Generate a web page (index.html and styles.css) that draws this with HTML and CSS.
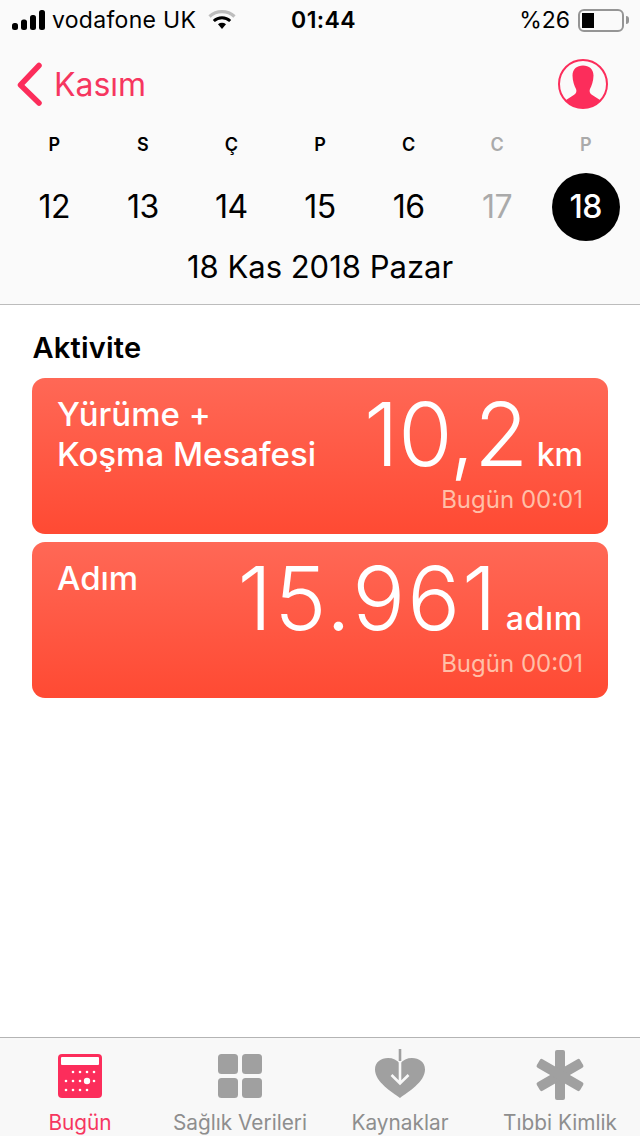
FILE: index.html
```html
<!DOCTYPE html>
<html lang="tr">
<head>
  <meta charset="UTF-8">
  <meta name="viewport" content="width=device-width, initial-scale=1.0">
  <title>Sağlık</title>
  <link rel="stylesheet" href="styles.css">
</head>
<body>
  <div class="page">
    <header class="top">
      <div class="status">
        <div class="status-left">
          <svg class="signal" width="33" height="20" viewBox="0 0 33 20">
            <rect x="0" y="13" width="6" height="7" rx="2.500"/>
            <rect x="9" y="9.500" width="6" height="10.500" rx="2.500"/>
            <rect x="18" y="5" width="6" height="15" rx="2.500"/>
            <rect x="27" y="0" width="6" height="20" rx="2.500"/>
          </svg>
          <span class="carrier">vodafone UK</span>
          <svg class="wifi" width="28" height="22" viewBox="0 0 28 22">
            <path d="M1.500 7.500C8.500 1 19.500 1 26.500 7.500" fill="none" stroke="#bdbdbd" stroke-width="3.200"/>
            <path d="M5.800 12C10.500 7.800 17.500 7.800 22.200 12" fill="none" stroke="#000" stroke-width="3"/>
            <path d="M10 15.200C12.400 13.400 15.600 13.400 18 15.200L14 20Z"/>
          </svg>
        </div>
        <div class="clock">01:44</div>
        <div class="status-right">
          <span class="percent">%26</span>
          <div class="battery"><div class="battery-level"></div></div>
          <div class="battery-tip"></div>
        </div>
      </div>

      <div class="nav">
        <a class="back">
          <svg width="28" height="44" viewBox="0 0 28 44">
            <path d="M23 3.500L4.500 23L23 41" fill="none" stroke="#fc2d5b" stroke-width="5.500" stroke-linecap="round" stroke-linejoin="round"/>
          </svg>
          <span>Kasım</span>
        </a>
        <svg class="profile" width="50" height="50" viewBox="0 0 50 50">
          <defs><clipPath id="round"><circle cx="25" cy="25" r="24"/></clipPath></defs>
          <circle cx="25" cy="25" r="24" fill="#fafafa" stroke="#fc2d5b" stroke-width="2"/>
          <path clip-path="url(#round)" fill="#fc2d5b" d="M25 6.500C31 6.500 35.500 10 35.500 16.500C35.500 22 33.500 27 32 30C31 33 32 35 35 36.500L42 41V50H8V41L15 36.500C18 35 19 33 18 30C16.500 27 14.500 22 14.500 16.500C14.500 10 19 6.500 25 6.500Z"/>
        </svg>
      </div>

      <div class="week">
        <div class="day"><b>P</b><span>12</span></div>
        <div class="day"><b>S</b><span>13</span></div>
        <div class="day"><b>Ç</b><span>14</span></div>
        <div class="day"><b>P</b><span>15</span></div>
        <div class="day"><b>C</b><span>16</span></div>
        <div class="day off"><b>C</b><span>17</span></div>
        <div class="day off current"><b>P</b><span>18</span></div>
      </div>
      <div class="full-date">18 Kas 2018 Pazar</div>
    </header>

    <main class="content">
      <h2 class="section">Aktivite</h2>

      <div class="card">
        <div class="card-title">Yürüme +<br>Koşma Mesafesi</div>
        <div class="card-data">
          <div class="reading"><span class="value tight">10,2</span><span class="unit">km</span></div>
          <div class="when">Bugün 00:01</div>
        </div>
      </div>

      <div class="card">
        <div class="card-title">Adım</div>
        <div class="card-data">
          <div class="reading"><span class="value">15.961</span><span class="unit wide">adım</span></div>
          <div class="when">Bugün 00:01</div>
        </div>
      </div>
    </main>

    <nav class="tabs">
      <div class="tab active">
        <svg width="44" height="44" viewBox="0 0 44 44">
          <rect width="44" height="44" rx="4" fill="#fc2d5b"/>
          <rect x="3" y="3" width="38" height="8" rx="1" fill="#fff"/>
          <g fill="#fff">
            <circle cx="15" cy="18" r="1.300"/><circle cx="22" cy="18" r="1.300"/><circle cx="29" cy="18" r="1.300"/><circle cx="36" cy="18" r="1.300"/>
            <circle cx="8" cy="27" r="1.300"/><circle cx="15" cy="27" r="1.300"/><circle cx="22" cy="27" r="1.300"/><circle cx="29" cy="27" r="3.200"/><circle cx="36" cy="27" r="1.300"/>
            <circle cx="8" cy="36" r="1.300"/><circle cx="15" cy="36" r="1.300"/><circle cx="22" cy="36" r="1.300"/><circle cx="29" cy="36" r="1.300"/>
          </g>
        </svg>
        <span>Bugün</span>
      </div>
      <div class="tab">
        <svg width="44" height="44" viewBox="0 0 44 44" fill="#a0a0a0">
          <rect width="20" height="20" rx="3.500"/><rect x="24" width="20" height="20" rx="3.500"/>
          <rect y="24" width="20" height="20" rx="3.500"/><rect x="24" y="24" width="20" height="20" rx="3.500"/>
        </svg>
        <span>Sağlık Verileri</span>
      </div>
      <div class="tab">
        <svg class="icon-heart" width="50" height="50" viewBox="0 0 50 50">
          <path fill="#a0a0a0" d="M25 49C17 43 0 33 0 20.500C0 13 6 9 13 9C18 9 22 11 25 14.500C28 11 32 9 37 9C44 9 50 13 50 20.500C50 33 33 43 25 49Z"/>
          <path d="M25 12V34.500M16.500 26L25 34.500L33.500 26" fill="none" stroke="#f8f8f8" stroke-width="2.600"/>
          <path d="M25 0V12" fill="none" stroke="#a0a0a0" stroke-width="2.600"/>
        </svg>
        <span>Kaynaklar</span>
      </div>
      <div class="tab">
        <svg class="icon-star" width="50" height="50" viewBox="0 0 50 50" fill="#a0a0a0">
          <rect x="20" y="0" width="10" height="50" rx="2"/>
          <rect x="20" y="0" width="10" height="50" rx="2" transform="rotate(60 25 25)"/>
          <rect x="20" y="0" width="10" height="50" rx="2" transform="rotate(120 25 25)"/>
        </svg>
        <span>Tıbbi Kimlik</span>
      </div>
    </nav>
  </div>
</body>
</html>
```

FILE: styles.css
```css
body{
  margin: 0;
  background: #fff;
  font-family: Inter, "Liberation Sans", sans-serif;
  color: #000;
}
.page{
  width: 640px;
  height: 1136px;
  display: flex;
  flex-direction: column;
  overflow: hidden;
}

/* header block */
.top{
  height: 304px;
  background: #fafafa;
  border-bottom: 1px solid #bcbcbc;
}
.status{
  height: 40px;
  padding: 0 11px 0 12px;
  display: flex;
  align-items: center;
  position: relative;
}
.status-left{
  display: flex;
  align-items: center;
}
.carrier{
  margin-left: 7px;
  font-size: 23px;
  letter-spacing: 0.3px;
}
.wifi{
  margin-left: 12px;
}
.clock{
  position: absolute;
  left: 7px;
  right: 0;
  text-align: center;
  font-size: 23px;
  font-weight: 600;
  letter-spacing: 0.4px;
}
.status-right{
  margin-left: auto;
  display: flex;
  align-items: center;
}
.percent{
  font-size: 23px;
  margin-right: 8px;
}
.battery{
  width: 46px;
  height: 23px;
  box-sizing: border-box;
  border: 2px solid #959595;
  border-radius: 6px;
  padding: 2px;
}
.battery-level{
  width: 12px;
  height: 100%;
  background: #000;
}
.battery-tip{
  width: 3px;
  height: 8px;
  margin-left: 2px;
  background: #959595;
  border-radius: 0 3px 3px 0;
}
.nav{
  height: 88px;
  padding: 0 32px 0 16px;
  display: flex;
  align-items: center;
  justify-content: space-between;
}
.back{
  display: flex;
  align-items: center;
  gap: 10px;
  color: #f6365f;
  font-size: 32px;
}
.week{
  display: grid;
  grid-template-columns: repeat(7, 1fr);
  padding: 0 10px;
}
.day{
  display: flex;
  flex-direction: column;
  align-items: center;
}
.day b{
  height: 32px;
  margin-top: 1px;
  line-height: 32px;
  font-size: 18px;
  font-weight: 600;
}
.day span{
  margin-top: 12px;
  width: 68px;
  height: 68px;
  line-height: 68px;
  border-radius: 50%;
  text-align: center;
  font-size: 32px;
  letter-spacing: -0.5px;
}
.off b, .off span{
  color: #aaa;
}
.current span{
  background: #000;
  color: #fff;
  font-weight: 500;
}
.full-date{
  margin-top: 6px;
  text-align: center;
  font-size: 31px;
  line-height: 40px;
}

/* cards */
.content{
  flex: 1;
  padding: 0 32px;
}
.section{
  margin: 24px 0 11px 0.5px;
  font-size: 29px;
  line-height: 38px;
  font-weight: 600;
  letter-spacing: 0.2px;
}
.card{
  height: 156px;
  margin-bottom: 8px;
  box-sizing: border-box;
  padding: 16px 25px 0;
  border-radius: 13px;
  background: linear-gradient(#ff6856, #ff4a33);
  color: #fff;
  display: flex;
  justify-content: space-between;
}
.card-title{
  font-size: 33px;
  line-height: 40px;
  font-weight: 500;
}
.card-data{
  text-align: right;
}
.reading{
  height: 92px;
  margin-top: -2px;
  display: flex;
  align-items: baseline;
  justify-content: flex-end;
  gap: 7px;
}
.value{
  font-size: 88px;
  line-height: 84px;
  font-weight: 300;
  letter-spacing: 2px;
}
.tight{
  letter-spacing: -0.5px;
  margin-right: 2px;
}
.unit{
  font-size: 32px;
  font-weight: 500;
}
.wide{
  letter-spacing: 0.7px;
}
.when{
  margin-top: 1px;
  font-size: 24px;
  line-height: 30px;
  color: #ffbfa8;
}

/* tab bar */
.tabs{
  height: 98px;
  background: #f8f8f8;
  border-top: 1px solid #b4b4b4;
  display: grid;
  grid-template-columns: repeat(4, 1fr);
}
.tab{
  position: relative;
  padding-top: 16px;
  box-sizing: border-box;
  display: flex;
  flex-direction: column;
  align-items: center;
  color: #8e8e8e;
  font-size: 20.800px;
}
.icon-heart{
  margin-top: -5px;
}
.icon-star{
  margin-top: -4px;
}
.tab span{
  position: absolute;
  top: 72px;
  white-space: nowrap;
}
.active{
  color: #f6365f;
}
```
